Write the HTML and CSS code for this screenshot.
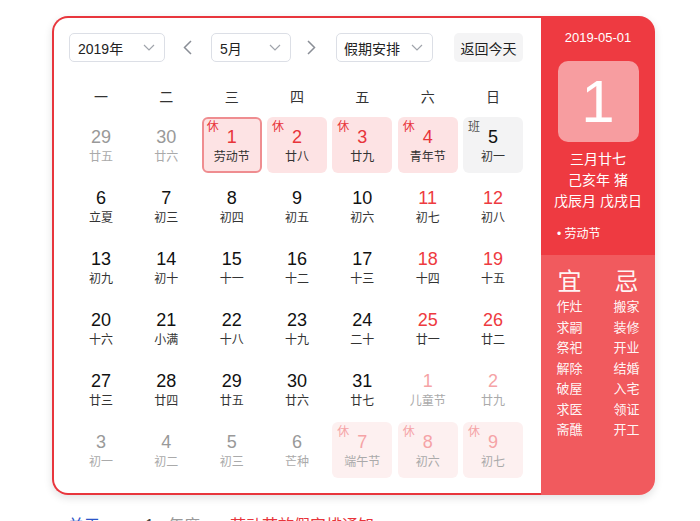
FILE: index.html
```html
<!DOCTYPE html>
<html lang="zh">
<head>
<meta charset="utf-8">
<title>万年历</title>
<link rel="stylesheet" href="styles.css">
</head>
<body>
<div class="card">
  <div class="main">
    <div class="controls">
      <div class="sel sel-year"><span>2019年</span><svg class="chev" width="12" height="7" viewBox="0 0 12 7"><polyline points="1,1 6,6 11,1"/></svg></div>
      <div class="arrow"><svg width="9" height="15" viewBox="0 0 9 15"><polyline points="8,1 1.5,7.5 8,14"/></svg></div>
      <div class="sel sel-month"><span>5月</span><svg class="chev" width="12" height="7" viewBox="0 0 12 7"><polyline points="1,1 6,6 11,1"/></svg></div>
      <div class="arrow arrow-r"><svg width="9" height="15" viewBox="0 0 9 15"><polyline points="1,1 7.5,7.5 1,14"/></svg></div>
      <div class="sel sel-holiday"><span>假期安排</span><svg class="chev" width="12" height="7" viewBox="0 0 12 7"><polyline points="1,1 6,6 11,1"/></svg></div>
      <div class="today">返回今天</div>
    </div>
    <div class="weekdays">
      <div>一</div><div>二</div><div>三</div><div>四</div><div>五</div><div>六</div><div>日</div>
    </div>
    <div class="grid">
      <div class="cell other"><div class="num">29</div><div class="lun">廿五</div></div>
      <div class="cell other"><div class="num">30</div><div class="lun">廿六</div></div>
      <div class="cell rest selected"><span class="tag">休</span><div class="num">1</div><div class="lun">劳动节</div></div>
      <div class="cell rest"><span class="tag">休</span><div class="num">2</div><div class="lun">廿八</div></div>
      <div class="cell rest"><span class="tag">休</span><div class="num">3</div><div class="lun">廿九</div></div>
      <div class="cell rest"><span class="tag">休</span><div class="num">4</div><div class="lun">青年节</div></div>
      <div class="cell work"><span class="tag">班</span><div class="num">5</div><div class="lun">初一</div></div>

      <div class="cell"><div class="num">6</div><div class="lun">立夏</div></div>
      <div class="cell"><div class="num">7</div><div class="lun">初三</div></div>
      <div class="cell"><div class="num">8</div><div class="lun">初四</div></div>
      <div class="cell"><div class="num">9</div><div class="lun">初五</div></div>
      <div class="cell"><div class="num">10</div><div class="lun">初六</div></div>
      <div class="cell wk"><div class="num">11</div><div class="lun">初七</div></div>
      <div class="cell wk"><div class="num">12</div><div class="lun">初八</div></div>

      <div class="cell"><div class="num">13</div><div class="lun">初九</div></div>
      <div class="cell"><div class="num">14</div><div class="lun">初十</div></div>
      <div class="cell"><div class="num">15</div><div class="lun">十一</div></div>
      <div class="cell"><div class="num">16</div><div class="lun">十二</div></div>
      <div class="cell"><div class="num">17</div><div class="lun">十三</div></div>
      <div class="cell wk"><div class="num">18</div><div class="lun">十四</div></div>
      <div class="cell wk"><div class="num">19</div><div class="lun">十五</div></div>

      <div class="cell"><div class="num">20</div><div class="lun">十六</div></div>
      <div class="cell"><div class="num">21</div><div class="lun">小满</div></div>
      <div class="cell"><div class="num">22</div><div class="lun">十八</div></div>
      <div class="cell"><div class="num">23</div><div class="lun">十九</div></div>
      <div class="cell"><div class="num">24</div><div class="lun">二十</div></div>
      <div class="cell wk"><div class="num">25</div><div class="lun">廿一</div></div>
      <div class="cell wk"><div class="num">26</div><div class="lun">廿二</div></div>

      <div class="cell"><div class="num">27</div><div class="lun">廿三</div></div>
      <div class="cell"><div class="num">28</div><div class="lun">廿四</div></div>
      <div class="cell"><div class="num">29</div><div class="lun">廿五</div></div>
      <div class="cell"><div class="num">30</div><div class="lun">廿六</div></div>
      <div class="cell"><div class="num">31</div><div class="lun">廿七</div></div>
      <div class="cell other wk"><div class="num">1</div><div class="lun">儿童节</div></div>
      <div class="cell other wk"><div class="num">2</div><div class="lun">廿九</div></div>

      <div class="cell other"><div class="num">3</div><div class="lun">初一</div></div>
      <div class="cell other"><div class="num">4</div><div class="lun">初二</div></div>
      <div class="cell other"><div class="num">5</div><div class="lun">初三</div></div>
      <div class="cell other"><div class="num">6</div><div class="lun">芒种</div></div>
      <div class="cell other rest"><span class="tag">休</span><div class="num">7</div><div class="lun">端午节</div></div>
      <div class="cell other rest"><span class="tag">休</span><div class="num">8</div><div class="lun">初六</div></div>
      <div class="cell other rest"><span class="tag">休</span><div class="num">9</div><div class="lun">初七</div></div>
    </div>
  </div>
  <div class="side">
    <div class="side-top">
      <div class="date">2019-05-01</div>
      <div class="bigday">1</div>
      <div class="info">
        <div>三月廿七</div>
        <div>己亥年 猪</div>
        <div>戊辰月 戊戌日</div>
      </div>
      <div class="fest">• 劳动节</div>
    </div>
    <div class="side-bottom">
      <div class="yiji">
        <div class="col">
          <div class="head">宜</div>
          <div>作灶</div><div>求嗣</div><div>祭祀</div><div>解除</div><div>破屋</div><div>求医</div><div>斋醮</div>
        </div>
        <div class="col">
          <div class="head">忌</div>
          <div>搬家</div><div>装修</div><div>开业</div><div>结婚</div><div>入宅</div><div>领证</div><div>开工</div>
        </div>
      </div>
    </div>
  </div>
</div>
<div class="footer">
  <span class="blue">关于</span><span class="dark">1</span><span class="gray">年度</span><span class="red">劳动节放假安排通知</span>
</div>
</body>
</html>
```

FILE: styles.css
```css
* { box-sizing: border-box; }
html, body { margin: 0; padding: 0; background: #fff; }
body {
  font-family: "Liberation Sans", "Noto Sans CJK SC", sans-serif;
  color: #333;
  overflow: hidden;
  height: 521px;
}
.card {
  display: flex;
  width: 603px;
  height: 479px;
  margin: 16px 0 0 52px;
  border-radius: 16px;
  box-shadow: 0 3px 8px rgba(0,0,0,0.12);
}
.main {
  width: 489px;
  border: 2px solid #e8363d;
  border-right: none;
  border-radius: 16px 0 0 16px;
  padding: 15px 18px 15px 15px;
  background: #fff;
}
.controls {
  display: flex;
  align-items: center;
  height: 29px;
}
.sel {
  height: 29px;
  border: 1px solid #dcdfe6;
  border-radius: 5px;
  display: flex;
  align-items: center;
  justify-content: space-between;
  padding: 0 9px 0 8px;
  font-size: 14px;
  color: #222;
}
.sel-year { width: 96px; }
.sel-month { width: 80px; }
.sel-holiday { width: 97px; padding-left: 7px; }
.chev polyline { fill: none; stroke: #a0a4ab; stroke-width: 1.2; }
.arrow {
  width: 46px;
  display: flex;
  justify-content: center;
  align-items: center;
  padding-right: 2px;
}
.arrow-r { width: 45px; padding-right: 4px; }
.arrow polyline { fill: none; stroke: #8a8e96; stroke-width: 1.5; }
.today {
  margin-left: 21px;
  width: 69px;
  height: 29px;
  background: #f4f4f5;
  border-radius: 5px;
  display: flex;
  align-items: center;
  justify-content: center;
  font-size: 14px;
  color: #222;
}
.weekdays {
  margin-top: 14px;
  height: 40px;
  display: grid;
  grid-template-columns: repeat(7, 60px);
  column-gap: 5.33px;
  padding-left: 2px;
  align-items: center;
  text-align: center;
  font-size: 14px;
  color: #333;
}
.grid {
  margin-top: 1px;
  display: grid;
  grid-template-columns: repeat(7, 60px);
  grid-auto-rows: 56px;
  column-gap: 5.33px;
  row-gap: 5px;
  padding-left: 2px;
}
.cell {
  position: relative;
  border-radius: 6px;
  padding-top: 9px;
  text-align: center;
}
.num {
  font-size: 18px;
  line-height: 22px;
  color: #111;
}
.lun {
  font-size: 12px;
  line-height: 18px;
  color: #333;
}
.tag {
  position: absolute;
  left: 5px;
  top: 3px;
  font-size: 12px;
  line-height: 14px;
  color: #e8343a;
}
.wk .num { color: #ee3a40; }
.rest { background: #fde3e4; }
.rest .num { color: #e8343a; }
.selected { border: 2px solid #ef8d90; padding-top: 7px; }
.selected .tag { left: 3px; top: 1px; }
.work { background: #f3f3f4; }
.work .tag { color: #555; }
.other .num { color: #999; }
.other .lun { color: #aaa; }
.other.wk .num { color: #f5a3a6; }
.other.rest { background: #fdf0f0; }
.other.rest .num, .other.rest .tag { color: #f5a3a6; }
.side {
  width: 114px;
  display: flex;
  flex-direction: column;
  border-radius: 0 16px 16px 0;
  overflow: hidden;
  color: #fff;
}
.side-top {
  background: #ee3a41;
  height: 239px;
  padding-top: 12px;
  display: flex;
  flex-direction: column;
  align-items: center;
}
.date { font-size: 13px; line-height: 20px; }
.bigday {
  margin-top: 13px;
  width: 81px;
  height: 81px;
  border-radius: 10px;
  background: rgba(255,255,255,0.5);
  display: flex;
  align-items: center;
  justify-content: center;
  font-size: 60px;
  color: #fff;
}
.info {
  margin-top: 7px;
  font-size: 14px;
  line-height: 21px;
  text-align: center;
}
.fest {
  align-self: flex-start;
  margin-left: 16px;
  margin-top: 12px;
  font-size: 12px;
  line-height: 20px;
}
.side-bottom {
  flex: 1;
  background: #f15a5e;
  padding-top: 12px;
}
.yiji { display: flex; }
.col {
  width: 57px;
  text-align: center;
  font-size: 13px;
  line-height: 20.5px;
  color: rgba(255,255,255,0.96);
}
.col .head { font-size: 24px; line-height: 30px; }
.footer {
  margin-top: 21px;
  display: flex;
  font-size: 16px;
  line-height: 20px;
  white-space: nowrap;
}
.blue { color: #2b55c8; margin-left: 68px; }
.dark { color: #444; margin-left: 45px; }
.gray { color: #999; margin-left: 14px; }
.red { color: #e8343a; margin-left: 30px; }
```
